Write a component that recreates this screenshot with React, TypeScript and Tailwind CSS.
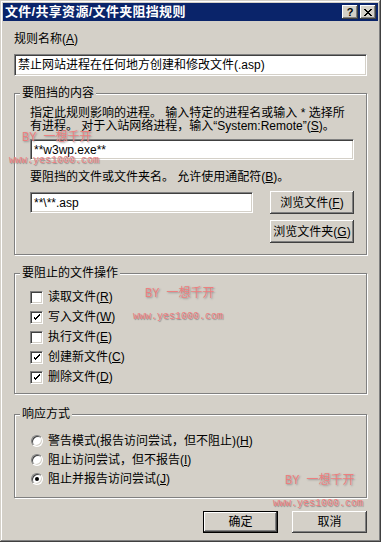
const font = "font-['Liberation_Sans','Noto_Sans_CJK_SC',sans-serif]"

function Field({ text, className }: { text: string; className: string }) {
  return (
    <div
      className={`${className} bg-white border border-t-[#808080] border-l-[#808080] border-b-white border-r-white shadow-[inset_1px_1px_0_#404040,inset_-1px_-1px_0_#d4d0c8] flex items-center pl-[3px] text-[12px] leading-[14px] text-black whitespace-pre`}
    >
      {text}
    </div>
  )
}

function Btn({ label, keyName, className }: { label: string; keyName?: string; className: string }) {
  return (
    <div
      className={`${className} flex items-center justify-center bg-[#d4d0c8] shadow-[inset_-1px_-1px_0_#404040,inset_1px_1px_0_#fff,inset_-2px_-2px_0_#808080] text-[12px] leading-[14px]`}
    >
      {label}
      {keyName && (
        <span>
          (<u>{keyName}</u>)
        </span>
      )}
    </div>
  )
}

function Check({ checked, label, k }: { checked: boolean; label: string; k: string }) {
  return (
    <div className="flex items-center h-[20px]">
      <div className="w-[13px] h-[13px] bg-white border border-t-[#808080] border-l-[#808080] border-b-white border-r-white shadow-[inset_1px_1px_0_#404040,inset_-1px_-1px_0_#d4d0c8] flex items-center justify-center">
        {checked && (
          <svg width="7" height="7" viewBox="0 0 7 7" shapeRendering="crispEdges">
            <path d="M0 2h1v3h1v1h1v-1h1v-1h1v-1h1v-1h1v-2h-1v1h-1v1h-1v1h-1v1h-1v-1h-1v-1h-1z" fill="#000" />
          </svg>
        )}
      </div>
      <span className="ml-[5px]">
        {label}(<u>{k}</u>)
      </span>
    </div>
  )
}

function Radio({ checked, label, k }: { checked: boolean; label: string; k: string }) {
  return (
    <div className="flex items-center h-[19px]">
      <div className="ml-[1px] w-[12px] h-[12px] rounded-full bg-white border border-t-[#808080] border-l-[#808080] border-b-white border-r-white shadow-[inset_1px_1px_0_#404040,inset_-1px_-1px_0_#d4d0c8] flex items-center justify-center">
        {checked && <div className="w-[4px] h-[4px] rounded-full bg-black" />}
      </div>
      <span className="ml-[5px]">
        {label}(<u>{k}</u>)
      </span>
    </div>
  )
}

function Mark({ by, www }: { by: string; www: string }) {
  return (
    <>
      <div className={`absolute ${by} font-['Liberation_Mono','Noto_Sans_CJK_SC',monospace] text-[12px] leading-[13px] text-[#ee7f7f] [text-shadow:1px_1px_2px_#8a8a8a] whitespace-pre`}>
        BY 一想千开
      </div>
      <div className={`absolute ${www} font-['Liberation_Mono',monospace] text-[10px] leading-[10px] text-[#ee7f7f] [text-shadow:1px_1px_1px_#8a8a8a] whitespace-pre`}>
        www.yes1000.com
      </div>
    </>
  )
}

export default function App() {
  return (
    <div
      className={`${font} relative w-[381px] h-[542px] bg-[#d4d0c8] p-[3px] text-[12px] leading-[14px] text-black shadow-[inset_-1px_-1px_0_#404040,inset_1px_1px_0_#d4d0c8,inset_-2px_-2px_0_#808080,inset_2px_2px_0_#fff] flex flex-col`}
    >
      {/* title bar */}
      <div className="h-[18px] bg-[#0a246a] flex items-center pl-[2px] pr-[2px]">
        <span className="text-white font-bold text-[13px] leading-[16px] tracking-[0.3px]">文件/共享资源/文件夹阻挡规则</span>
        <div className="ml-auto flex gap-[2px]">
          <div className="w-[16px] h-[14px] bg-[#d4d0c8] shadow-[inset_-1px_-1px_0_#404040,inset_1px_1px_0_#fff,inset_-2px_-2px_0_#808080] flex items-center justify-center font-['Liberation_Sans',sans-serif] font-bold text-[11px] leading-[11px]">
            ?
          </div>
          <div className="w-[16px] h-[14px] bg-[#d4d0c8] shadow-[inset_-1px_-1px_0_#404040,inset_1px_1px_0_#fff,inset_-2px_-2px_0_#808080] flex items-center justify-center">
            <svg width="8" height="7" viewBox="0 0 8 7" shapeRendering="crispEdges">
              <path d="M0 0h2v1h1v1h2v-1h1v-1h2v1h-1v1h-1v1h-1v1h1v1h1v1h1v1h-2v-1h-1v-1h-2v1h-1v1h-2v-1h1v-1h1v-1h1v-1h-1v-1h-1v-1h-1z" fill="#000" />
            </svg>
          </div>
        </div>
      </div>

      <div className="px-[11px] pt-[11px] flex flex-col">
        <div>
          规则名称(<u>A</u>)
        </div>
        <Field text="禁止网站进程在任何地方创建和修改文件(.asp)" className="mt-[8px] h-[22px]" />

        <fieldset className="mt-[10px] min-w-0 border border-[#808080] shadow-[inset_1px_1px_0_#fff,1px_1px_0_#fff] pl-[15px] pr-[12px] pt-[7px] pb-[11px]">
          <legend className="ml-[-10px] px-[2px] bg-[#d4d0c8] leading-[14px]">要阻挡的内容</legend>
          <div className="leading-[13px]">
            指定此规则影响的进程。 输入特定的进程名或输入 * 选择所
            <br />
            有进程。 对于入站网络进程，输入“System:Remote”(<u>S</u>)。
          </div>
          <Field text="**w3wp.exe**" className="mt-[6px] h-[21px]" />
          <div className="mt-[10px]">
            要阻挡的文件或文件夹名。 允许使用通配符(<u>B</u>)。
          </div>
          <div className="mt-[7px] flex">
            <Field text="**\**.asp" className="mt-[1px] w-[223px] h-[21px]" />
            <div className="ml-auto flex flex-col gap-[6px]">
              <Btn label="浏览文件" keyName="F" className="w-[84px] h-[23px]" />
              <Btn label="浏览文件夹" keyName="G" className="w-[84px] h-[23px]" />
            </div>
          </div>
        </fieldset>

        <fieldset className="mt-[11px] min-w-0 border border-[#808080] shadow-[inset_1px_1px_0_#fff,1px_1px_0_#fff] pl-[15px] pr-[12px] pt-[7px] pb-[6px]">
          <legend className="ml-[-10px] px-[2px] bg-[#d4d0c8] leading-[14px]">要阻止的文件操作</legend>
          <Check checked={false} label="读取文件" k="R" />
          <Check checked={true} label="写入文件" k="W" />
          <Check checked={false} label="执行文件" k="E" />
          <Check checked={true} label="创建新文件" k="C" />
          <Check checked={true} label="删除文件" k="D" />
        </fieldset>

        <fieldset className="mt-[13px] min-w-0 border border-[#808080] shadow-[inset_1px_1px_0_#fff,1px_1px_0_#fff] pl-[15px] pr-[12px] pt-[10px] pb-[9px]">
          <legend className="ml-[-10px] px-[2px] bg-[#d4d0c8] leading-[14px]">响应方式</legend>
          <Radio checked={false} label="警告模式(报告访问尝试，但不阻止)" k="H" />
          <Radio checked={false} label="阻止访问尝试，但不报告" k="I" />
          <Radio checked={true} label="阻止并报告访问尝试" k="J" />
        </fieldset>

        <div className="mt-[13px] flex justify-end gap-[14px]">
          <div className="w-[75px] h-[22px] border border-black">
            <Btn label="确定" className="w-full h-full" />
          </div>
          <Btn label="取消" className="w-[75px] h-[22px]" />
        </div>
      </div>

      <Mark by="left-[22px] top-[132px]" www="left-[9px] top-[156px]" />
      <Mark by="left-[145px] top-[288px]" www="left-[133px] top-[312px]" />
      <Mark by="left-[285px] top-[475px]" www="left-[273px] top-[499px]" />
    </div>
  )
}
